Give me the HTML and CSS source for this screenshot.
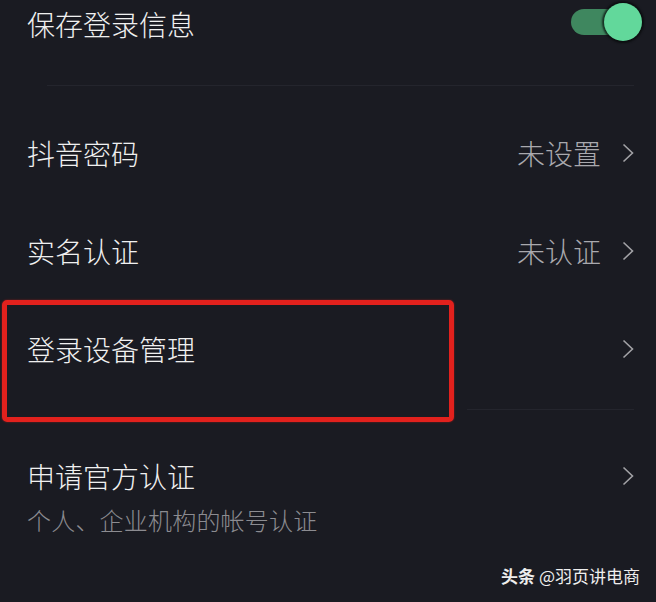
FILE: index.html
```html
<!DOCTYPE html>
<html lang="zh-CN">
<head>
<meta charset="utf-8">
<link rel="stylesheet" href="styles.css">
</head>
<body>
<div class="screen">
  <div class="row row-toggle">
    <span class="label">保存登录信息</span>
    <span class="switch"><span class="knob"></span></span>
  </div>
  <div class="divider divider-top"></div>
  <div class="row">
    <span class="label">抖音密码</span>
    <span class="value">未设置</span>
    <svg class="chev" viewBox="0 0 12 20" width="12" height="20"><path d="M1.5 1.5 L10.5 10 L1.5 18.5" fill="none" stroke="#a2a2a6" stroke-width="1.6"/></svg>
  </div>
  <div class="row">
    <span class="label">实名认证</span>
    <span class="value">未认证</span>
    <svg class="chev" viewBox="0 0 12 20" width="12" height="20"><path d="M1.5 1.5 L10.5 10 L1.5 18.5" fill="none" stroke="#a2a2a6" stroke-width="1.6"/></svg>
  </div>
  <div class="row">
    <span class="label">登录设备管理</span>
    <svg class="chev" viewBox="0 0 12 20" width="12" height="20"><path d="M1.5 1.5 L10.5 10 L1.5 18.5" fill="none" stroke="#a2a2a6" stroke-width="1.6"/></svg>
  </div>
  <div class="divider divider-mid"></div>
  <div class="row-multi">
    <div class="row-head">
      <span class="label">申请官方认证</span>
      <svg class="chev" viewBox="0 0 12 20" width="12" height="20"><path d="M1.5 1.5 L10.5 10 L1.5 18.5" fill="none" stroke="#a2a2a6" stroke-width="1.6"/></svg>
    </div>
    <div class="sub">个人、企业机构的帐号认证</div>
  </div>
  <div class="footer"><b>头条</b> @羽页讲电商</div>
  <div class="highlight"></div>
</div>
</body>
</html>
```

FILE: styles.css
```css
html, body {
  margin: 0;
  padding: 0;
  background: #1a1b22;
}
body {
  font-family: "Noto Sans CJK SC", "Noto Sans", sans-serif;
  color: #f2f2f2;
}
.screen {
  position: relative;
  width: 656px;
  height: 602px;
  overflow: hidden;
  display: flex;
  flex-direction: column;
}
.row {
  height: 98px;
  display: flex;
  align-items: center;
  padding: 0 22px 0 27px;
}
.row-toggle {
  height: 48px;
  padding-right: 15px;
}
.label {
  font-size: 28px;
  font-weight: 300;
  line-height: 34px;
  flex: 1;
  color: #f0f0f0;
}
.value {
  font-size: 28px;
  font-weight: 300;
  line-height: 34px;
  color: #a9a9ae;
  margin-right: 21px;
}
.chev {
  display: block;
  flex: none;
}
.switch {
  position: relative;
  width: 52px;
  height: 26px;
  border-radius: 13px;
  background: #3f875f;
  margin-right: 18px;
  margin-top: -4px;
}
.knob {
  position: absolute;
  right: -19px;
  top: -6px;
  width: 38px;
  height: 38px;
  border-radius: 50%;
  background: #62d89b;
  box-shadow: 0 0 2px 2px rgba(5, 8, 8, 0.7);
}
.divider {
  height: 1px;
  background: #24252d;
  margin: 0 22px 0 47px;
}
.divider-top {
  margin-top: 37px;
  margin-bottom: 18px;
}
.divider-mid {
  margin-top: 11px;
  margin-left: 467px;
}
.row-multi {
  padding: 49px 22px 0 27px;
}
.row-head {
  display: flex;
  align-items: center;
}
.sub {
  margin-top: 10px;
  font-size: 24px;
  font-weight: 300;
  line-height: 34px;
  color: #8c8c91;
  letter-spacing: 0.2px;
}
.footer {
  margin-top: auto;
  align-self: flex-end;
  margin-right: 16px;
  margin-bottom: 14px;
  font-size: 17px;
  line-height: 24px;
  color: #eeeeee;
}
.footer b {
  font-weight: 700;
}
.highlight {
  position: absolute;
  left: 2px;
  top: 300px;
  width: 452px;
  height: 122px;
  box-sizing: border-box;
  border: 5px solid #e2211d;
  border-radius: 5px;
  box-shadow: 0 0 2px rgba(226, 33, 29, 0.6);
}
```
